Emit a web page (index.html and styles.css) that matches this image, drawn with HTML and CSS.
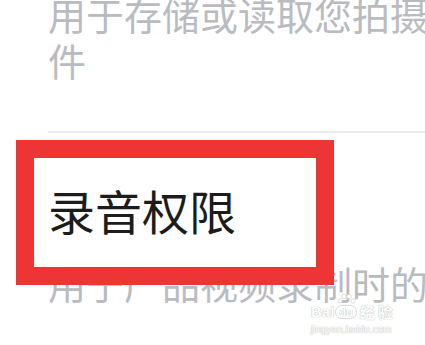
FILE: index.html
```html
<!DOCTYPE html>
<html lang="zh-CN">
<head>
    <meta charset="UTF-8">
    <title>权限说明</title>
    <meta name="viewport" content="width=device-width, initial-scale=1.0">
    <link rel="stylesheet" href="styles.css">
</head>
<body>
    <div class="perm-list">
        <div class="perm-item first">
            <p class="perm-desc">用于存储或读取您拍摄的照片、视频等文件</p>
        </div>
        <div class="perm-item">
            <h2 class="perm-title">录音权限</h2>
            <p class="perm-desc">用于产品视频录制时的声音采集</p>
        </div>
    </div>

    <!-- 标注框 -->
    <div class="mark"></div>

    <div class="watermark">
        <div class="wm-logo">
            <span>Bai</span>
            <span class="wm-du">
                <svg class="wm-paw" width="20" height="12" viewBox="0 0 20 12">
                    <circle cx="4" cy="8" r="2.2"/>
                    <circle cx="8" cy="3.5" r="2.2"/>
                    <circle cx="13" cy="3.5" r="2.2"/>
                    <circle cx="17" cy="8" r="2.2"/>
                </svg>du</span>
            <span class="wm-cn">经验</span>
        </div>
        <div class="wm-url">jingyan.baidu.com</div>
    </div>
</body>
</html>
```

FILE: styles.css
```css
html, body { margin: 0; padding: 0; }
body {
    width: 425px; height: 345px; overflow: hidden; position: relative;
    background: #fff; font-family: "Noto Sans CJK SC", "Noto Sans", sans-serif;
}
.perm-list { padding-left: 48px; margin-top: -9px; }
.perm-item { border-top: 2px solid #ebecef; padding-top: 49px; }
.perm-item.first { border-top: none; padding-top: 0; padding-bottom: 48px; }
.perm-desc {
    margin: 0; font-size: 38px; line-height: 46px; color: #b9bbc1;
    white-space: nowrap;
}
.first .perm-desc { white-space: normal; width: 690px; }
.perm-title {
    margin: 0 0 22px 0; font-size: 47px; line-height: 56px;
    font-weight: normal; color: #1c1c1c;
}

.mark {
    position: absolute; left: 16px; top: 140px;
    width: 282px; height: 109px;
    border: 18px solid #ee3536;
}

.watermark {
    position: absolute; left: 311px; top: 303px;
    color: #fff; font-family: "Liberation Sans", sans-serif;
    text-shadow: 0 0 1px #b5b5b5, 0 0 1px #c8c8c8;
}
.wm-logo { display: flex; align-items: center; gap: 1px; font-size: 15px; font-weight: bold; line-height: 18px; }
.wm-du {
    position: relative; font-size: 11px; line-height: 12px;
    border: 1px solid #d9d9d9; border-radius: 7px; padding: 0 3px;
}
.wm-paw { position: absolute; left: 0; top: -13px; fill: #fff; stroke: #d4d4d4; stroke-width: 0.8; }
.wm-cn { font-family: "Noto Sans CJK SC", sans-serif; font-size: 15px; letter-spacing: 3px; margin-left: 2px; }
.wm-url { font-size: 10px; line-height: 12px; margin-top: 3px; }
```
